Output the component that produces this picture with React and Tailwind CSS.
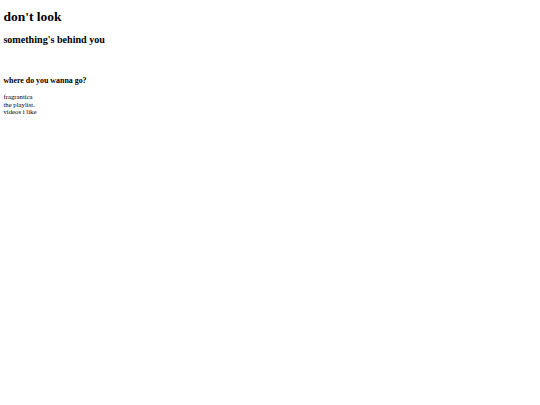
export default function App() {
  const links = ['fragrantica', 'the playlist.', 'videos i like'];
  return (
    <div className="min-h-[405px] bg-white px-[3.4px] pt-[9px] text-black font-['Liberation_Serif',serif]">
      <h1 className="text-[13.5px] font-bold leading-[15.5px]">don't look</h1>
      <h2 className="mt-[9px] text-[10.1px] font-bold leading-[11.6px]">something's behind you</h2>
      <h3 className="mt-[31px] text-[7.9px] font-bold leading-[9.1px]">where do you wanna go?</h3>
      <div className="mt-[7.9px] flex flex-col text-[6.75px] leading-[7.6px]">
        {links.map((l) => (
          <a key={l} href="#" className="text-black no-underline">
            {l}
          </a>
        ))}
      </div>
    </div>
  );
}
